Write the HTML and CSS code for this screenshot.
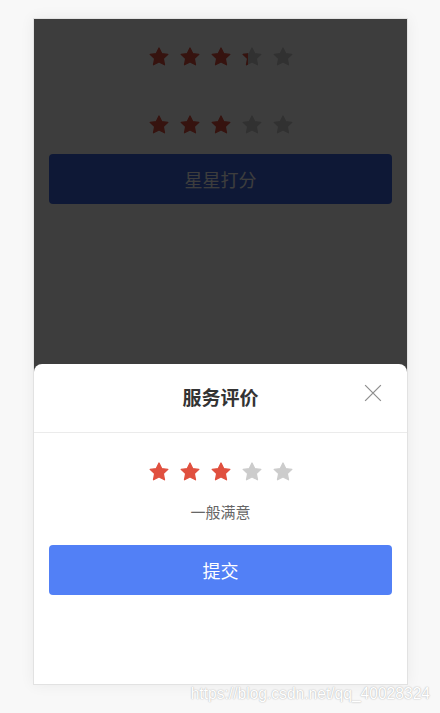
FILE: index.html
```html
<!DOCTYPE html>
<html lang="zh-CN">

<head>
    <meta charset="UTF-8">
    <meta name="viewport" content="width=device-width, initial-scale=1.0">
    <title>星星打分</title>

    <link rel="stylesheet" href="styles.css">
</head>

<body>
    <svg class="defs" aria-hidden="true">
        <symbol id="star" viewBox="0 0 24 24">
            <path d="M12 2.2l2.95 6.1 6.7.85-4.9 4.65 1.25 6.65L12 17.25l-6 3.2 1.25-6.65-4.9-4.65 6.7-.85z"
                stroke="currentColor" stroke-width="1.4" stroke-linejoin="round" />
        </symbol>
    </svg>

    <div class="phone">
        <div class="page">
            <div class="rate">
                <span class="star on"><svg><use href="#star" /></svg></span>
                <span class="star on"><svg><use href="#star" /></svg></span>
                <span class="star on"><svg><use href="#star" /></svg></span>
                <span class="star half"><svg><use href="#star" /></svg><i><svg><use href="#star" /></svg></i></span>
                <span class="star"><svg><use href="#star" /></svg></span>
            </div>
            <div class="rate rate-second">
                <span class="star on"><svg><use href="#star" /></svg></span>
                <span class="star on"><svg><use href="#star" /></svg></span>
                <span class="star on"><svg><use href="#star" /></svg></span>
                <span class="star"><svg><use href="#star" /></svg></span>
                <span class="star"><svg><use href="#star" /></svg></span>
            </div>
            <button type="button" class="btn">星星打分</button>
        </div>

        <div class="mask"></div>

        <div class="sheet">
            <div class="sheet-head">
                <h2>服务评价</h2>
                <button type="button" class="close" aria-label="关闭">
                    <svg viewBox="0 0 16 16"><path d="M1 1l14 14M15 1L1 15" /></svg>
                </button>
            </div>
            <div class="sheet-body">
                <div class="rate">
                    <span class="star on"><svg><use href="#star" /></svg></span>
                    <span class="star on"><svg><use href="#star" /></svg></span>
                    <span class="star on"><svg><use href="#star" /></svg></span>
                    <span class="star"><svg><use href="#star" /></svg></span>
                    <span class="star"><svg><use href="#star" /></svg></span>
                </div>
                <p class="rate-text">一般满意</p>
                <button type="button" class="btn">提交</button>
            </div>
        </div>
    </div>

    <p class="mark">https://blog.csdn.net/qq_40028324</p>
</body>

</html>
```

FILE: styles.css
```css
/* 공통 */
* {
    box-sizing: border-box;
}

body {
    margin: 0;
    height: 713px;
    background: #f8f8f8;
    font-family: "Noto Sans CJK SC", "Noto Sans", sans-serif;
    position: relative;
    overflow: hidden;
}

h2,
p {
    margin: 0;
}

button {
    display: block;
    background-color: transparent;
    border: 0;
    padding: 0;
    cursor: pointer;
    font-family: inherit;
}

.defs {
    position: absolute;
    width: 0;
    height: 0;
}

/* 세부 */
.phone {
    position: relative;
    width: 375px;
    height: 667px;
    margin: 18px 0 0 33px;
    background: #fff;
    border: 1px solid #e2e2e2;
    box-shadow: 0 0 14px rgba(0, 0, 0, 0.06);
    overflow: hidden;
}

.page {
    padding: 27px 15px 0;
}

.rate {
    display: flex;
    justify-content: center;
    gap: 9px;
}

.rate-second {
    margin-top: 46px;
}

.star {
    position: relative;
    width: 22px;
    height: 22px;
    color: #cccccc;
}

.star svg {
    display: block;
    width: 22px;
    height: 22px;
    fill: currentColor;
}

.star.on {
    color: #e0503f;
}

.star.half i {
    position: absolute;
    left: 0;
    top: 0;
    width: 7px;
    height: 22px;
    overflow: hidden;
    color: #e0503f;
}

.btn {
    width: 100%;
    height: 50px;
    border-radius: 4px;
    background: #5280f6;
    color: #fff;
    font-size: 18px;
    text-align: center;
}

.page .btn {
    margin-top: 18px;
    background: #3c66e0;
}

.mask {
    position: absolute;
    inset: 0;
    background: rgba(0, 0, 0, 0.76);
}

.sheet {
    position: absolute;
    left: 0;
    right: 0;
    bottom: 0;
    height: 320px;
    background: #fff;
    border-radius: 8px 8px 0 0;
}

.sheet-head {
    position: relative;
    height: 69px;
    padding-bottom: 3px;
    border-bottom: 1px solid #ebebeb;
    display: flex;
    align-items: center;
    justify-content: center;
}

.sheet-head h2 {
    font-size: 19px;
    font-weight: 700;
    color: #333;
}

.close {
    position: absolute;
    right: 25px;
    top: 20px;
    width: 18px;
    height: 18px;
}

.close svg {
    display: block;
    width: 18px;
    height: 18px;
    stroke: #8e8e8e;
    stroke-width: 1.1;
    fill: none;
}

.sheet-body {
    padding: 28px 15px 0;
}

.rate-text {
    margin-top: 17px;
    font-size: 15px;
    line-height: 24px;
    color: #666;
    text-align: center;
}

.sheet-body .btn {
    margin-top: 21px;
}

.mark {
    position: absolute;
    right: 10px;
    top: 682px;
    font-family: "Liberation Sans", Arial, sans-serif;
    font-size: 15.6px;
    line-height: 24px;
    color: #fff;
    text-shadow: 0 0 1px #b0b0b0, 0 0 2px #d0d0d0;
}
```
